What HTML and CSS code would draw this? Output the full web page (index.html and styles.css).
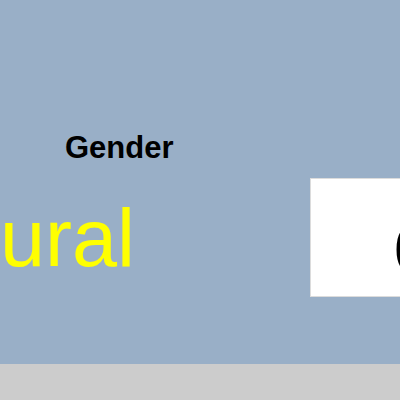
FILE: index.html
```html
<!DOCTYPE html>
<html>
<head>
<meta charset="utf-8">
<link rel="stylesheet" href="styles.css">
</head>
<body>
<div class="stage">
  <div class="label">Gender</div>
  <div class="row">
    <div class="word">ural</div>
    <div class="box"><span class="value">0</span></div>
  </div>
</div>
<div class="footer"></div>
</body>
</html>
```

FILE: styles.css
```css
html, body {
  margin: 0;
  padding: 0;
  width: 400px;
  height: 400px;
  overflow: hidden;
  font-family: "Liberation Sans", Arial, sans-serif;
}
.stage {
  height: 364px;
  box-sizing: border-box;
  padding-top: 132px;
  background: #99afc7;
  overflow: hidden;
}
.label {
  margin-left: 65px;
  font-size: 31px;
  line-height: 31px;
  font-weight: bold;
  color: #000;
}
.row {
  display: flex;
  align-items: flex-start;
  margin-top: 15px;
}
.word {
  flex: 0 0 310px;
  margin-top: 20px;
  font-size: 81px;
  line-height: 81px;
  color: #ffff00;
  white-space: nowrap;
}
.box {
  flex: 0 0 auto;
  width: 200px;
  height: 119px;
  box-sizing: border-box;
  border: 1px solid #dcdcdc;
  background: #fff;
  padding: 39px 0 0 83px;
}
.value {
  display: block;
  font-size: 64px;
  line-height: 64px;
  color: #000;
}
.footer {
  height: 36px;
  background: #cccccc;
}
```
